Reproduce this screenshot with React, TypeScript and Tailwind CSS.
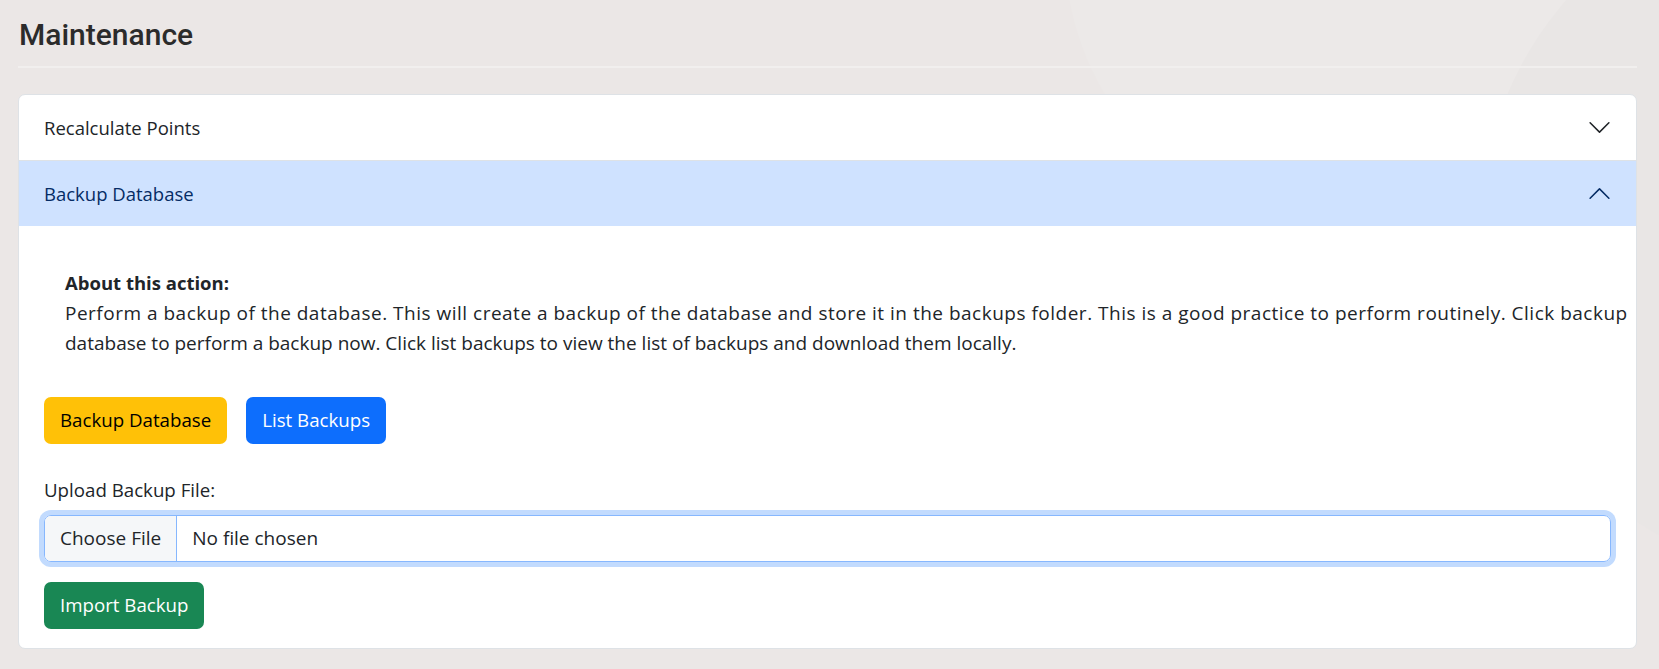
import React from 'react';

const Chevron: React.FC<{ up?: boolean; color: string }> = ({ up, color }) => (
  <svg
    width="25"
    height="25"
    viewBox="0 0 16 16"
    fill={color}
    className={up ? 'rotate-180' : ''}
  >
    <path
      fillRule="evenodd"
      d="M1.646 4.646a.5.5 0 0 1 .708 0L8 10.293l5.646-5.647a.5.5 0 0 1 .708.708l-6 6a.5.5 0 0 1-.708 0l-6-6a.5.5 0 0 1 0-.708z"
    />
  </svg>
);

export default function App() {
  return (
    <div className="relative min-h-screen overflow-hidden bg-[#ebe7e6] pl-[18px] pr-[22px] pt-[17px] pb-[22px] text-[#212529] font-['Open_Sans','Liberation_Sans',sans-serif]">
      {/* faint background shapes */}
      <div className="pointer-events-none absolute left-[1065px] top-[-330px] w-[560px] h-[560px] rounded-full bg-[#ece9e8]" />
      <div className="pointer-events-none absolute left-[1480px] top-[-120px] w-[700px] h-[700px] rounded-full bg-[#e9e6e5]" />

      <div className="relative">
        {/* Page title */}
        <div className="border-b-2 border-[#f1efee] pb-[13px]">
          <h3 className="pl-px text-[30px] leading-[36px] font-medium text-[#2b2b2b] font-['Roboto',sans-serif]">
            Maintenance
          </h3>
        </div>

        {/* Accordion */}
        <div className="mt-[26px] bg-white border border-[#dee2e6] rounded-[7px] overflow-hidden">
          <button className="w-full h-[66px] border-b border-[#dee2e6] flex items-center justify-between pl-[25px] pr-[24px] text-[18.5px] text-[#212529]">
            <span>Recalculate Points</span>
            <Chevron color="#212529" />
          </button>
          <button className="w-full h-[65px] bg-[#cfe2ff] flex items-center justify-between pl-[25px] pr-[24px] text-[18.5px] text-[#052c65]">
            <span>Backup Database</span>
            <Chevron up color="#052c65" />
          </button>

          <div className="px-[25px] pt-[24px] pb-[19px]">
            <div className="pl-[21px] pt-[18px] text-[19px] leading-[30px] whitespace-nowrap">
              <p className="font-bold text-[18.5px]">About this action:</p>
              <p>
                <span className="block tracking-[0.5px]">
                  Perform a backup of the database. This will create a backup of the database and store it in the backups folder. This is a good practice to perform routinely. Click backup
                </span>
                <span className="block tracking-[0px]">
                  database to perform a backup now. Click list backups to view the list of backups and download them locally.
                </span>
              </p>
            </div>

            <div className="mt-[39px] flex gap-[19px]">
              <button className="h-[47px] px-[16px] rounded-[7px] bg-[#ffc107] text-[18.7px] text-black">
                Backup Database
              </button>
              <button className="h-[47px] px-[16px] rounded-[7px] bg-[#0d6efd] text-[18.7px] text-white">
                List Backups
              </button>
            </div>

            <label className="block mt-[31px] text-[18.7px] leading-[30px]">Upload Backup File:</label>
            <div className="mt-[10px] h-[47px] flex items-stretch border border-[#86b7fe] rounded-[7px] ring-[5px] ring-[#c2dbfe] overflow-hidden text-[19px]">
              <span className="flex items-center px-[15px] bg-[#f5f7f9] border-r border-[#86b7fe]">Choose File</span>
              <span className="flex items-center pl-[15px]">No file chosen</span>
            </div>

            <button className="mt-[20px] h-[47px] px-[16px] rounded-[7px] bg-[#198754] text-[18.7px] text-white">
              Import Backup
            </button>
          </div>
        </div>
      </div>
    </div>
  );
}
